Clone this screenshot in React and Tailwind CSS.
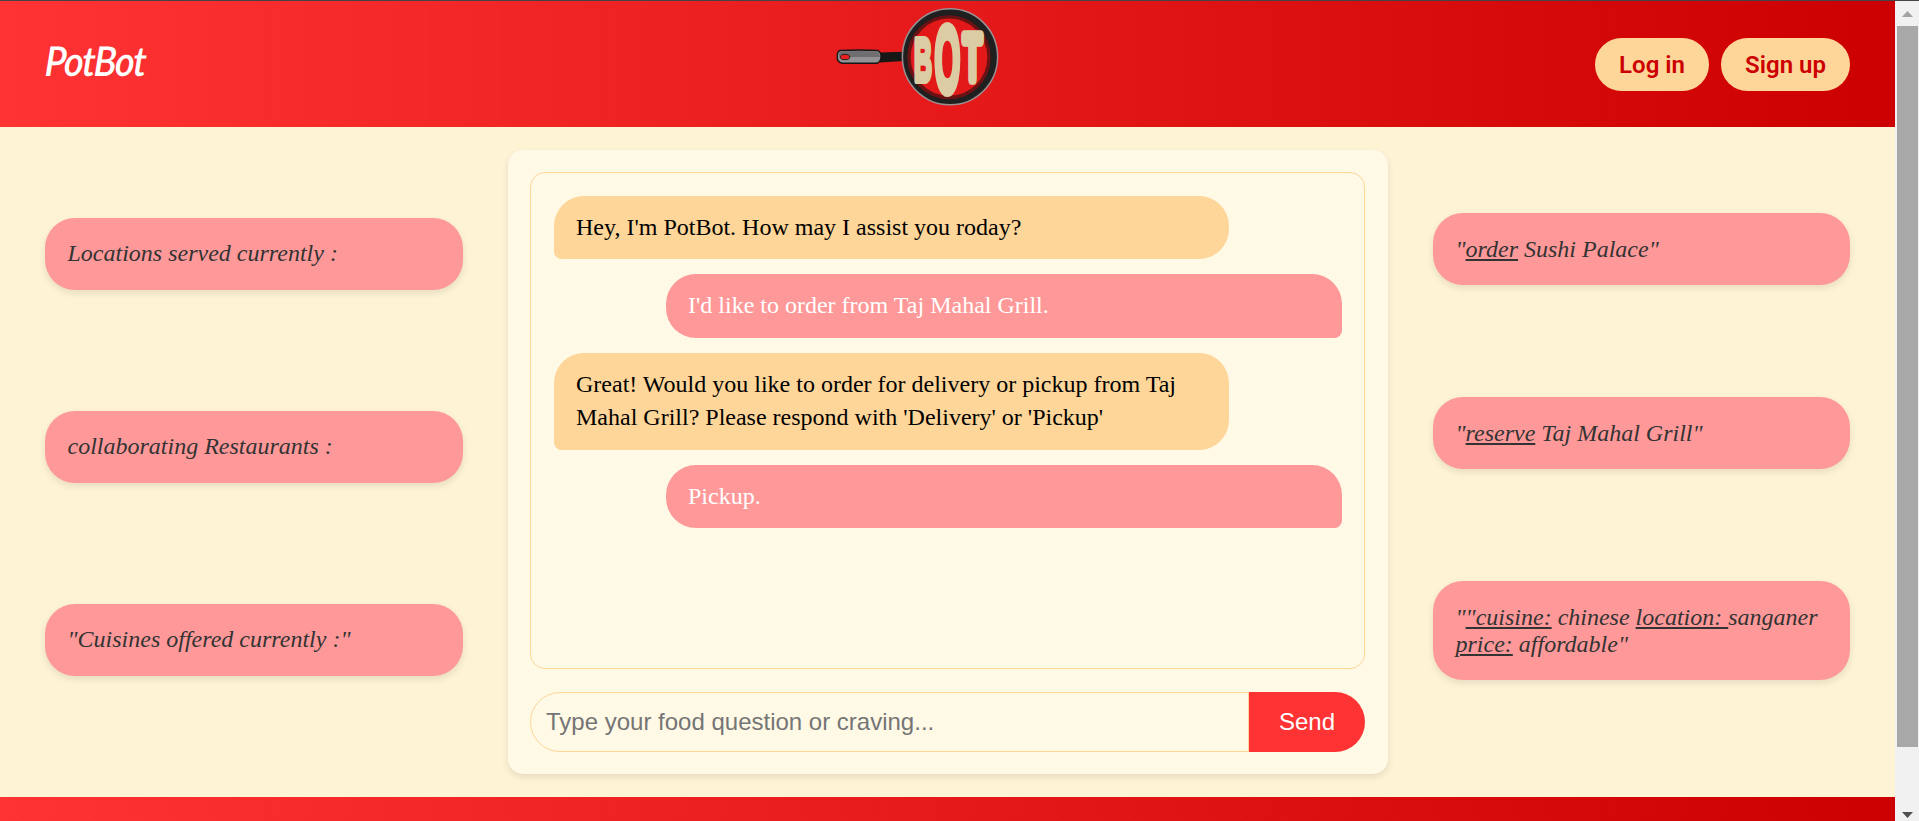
import React from "react";

const serif = "font-['Liberation_Serif',serif]";

function PanLogo() {
  return (
    <svg className="h-[120px] w-[200px]" viewBox="0 0 200 120" aria-label="Bot">
      <path d="M60 52.5 L84 51.8 V61 L60 62.5 Z" fill="#171717" />
      <path d="M20 50.5 Q38 49.5 58 50.5 Q61.5 53 61 57 Q61 61 57.5 63.2 L22 63.2 Q17 62 17.2 57 Q17 51.5 20 50.5Z" fill="#949294" stroke="#161616" strokeWidth="1.4" />
      <path d="M21 51.6 Q40 50.6 57.5 51.6 Q60 54 60 57 H30 Q28 53.5 24 54 Q20 54.5 19 57 Q18.5 53 21 51.6Z" fill="#6f6d6f" />
      <ellipse cx="25" cy="57" rx="4.8" ry="2.7" fill="#e91e1e" stroke="#222" strokeWidth="1" />
      <ellipse cx="130" cy="56.8" rx="47.6" ry="48" fill="#1f1f1f" stroke="#989092" strokeWidth="1.5" />
      <ellipse cx="129" cy="57.2" rx="40" ry="40.3" fill="#e31919" stroke="#6b1214" strokeWidth="3.4" />
      <g fill="#dccca4" stroke="#dccca4" strokeLinejoin="round" className="font-['Liberation_Sans',sans-serif] font-bold">
        <text transform="translate(94 80.5) scale(.83 2.05)" fontSize="30" strokeWidth="3">B</text>
        <text transform="translate(114.4 91.8) scale(.72 2.04)" fontSize="46" strokeWidth="4">O</text>
        <text transform="translate(143.3 79) scale(.95 1.95)" fontSize="32" strokeWidth="6" className="font-normal">T</text>
      </g>
    </svg>
  );
}

function Bubble({ mine, children }) {
  return (
    <div
      className={
        "rounded-[30px] px-[22.5px] py-[15px] text-2xl leading-[33.6px] " +
        (mine
          ? "w-[676px] self-end rounded-br-[7.5px] bg-[#ff9999] text-white"
          : "w-[675.5px] rounded-bl-[7.5px] bg-[#ffd699] text-black")
      }
    >
      {children}
    </div>
  );
}

function Hint({ children }) {
  return (
    <div className="rounded-[30px] bg-[#ff9999] p-[22.5px] text-2xl leading-[27px] text-[#333] italic shadow-[0_3px_7.5px_rgba(0,0,0,0.1)]">
      {children}
    </div>
  );
}

function Scrollbar() {
  return (
    <div className="flex w-6 shrink-0 flex-col items-center bg-[#f1f1f1]">
      <svg className="h-[25px] w-6 shrink-0" viewBox="0 0 24 25"><path d="M7 16 L12.5 10 L18 16Z" fill="#a3a3a3" /></svg>
      <div className="h-[721px] w-[21px] shrink-0 bg-[#a8a8a8]" />
      <div className="grow" />
      <svg className="h-[25px] w-6 shrink-0" viewBox="0 0 24 25"><path d="M7 16 L12.5 22 L18 16Z" fill="#505050" /></svg>
    </div>
  );
}

export default function App() {
  return (
    <div className={`flex h-[821px] w-[1919px] flex-col overflow-hidden ${serif}`}>
      <div className="h-px shrink-0 bg-[#444]" />
      <div className="flex min-h-0 grow">
        <div className="flex w-[1895px] shrink-0 flex-col bg-[#fff3d6]">
          <header className="grid h-[126px] shrink-0 grid-cols-[775px_200px_1fr] bg-[linear-gradient(90deg,#ff3333,#cc0000)]">
            <div className="pt-[37px] pl-[45px]">
              <span className="inline-block origin-left scale-x-[.92] -skew-x-3 font-['Lato',cursive] text-[41px] leading-[46px] font-semibold tracking-[-1.5px] text-white italic">PotBot</span>
            </div>
            <div className="pl-[45px]"><div className="-mt-px w-[200px]"><PanLogo /></div></div>
            <div className="flex justify-end gap-3 pt-[37px] pr-[45px] font-['Roboto',sans-serif] text-2xl font-semibold text-[#cc0000]">
              <button className="h-[53px] w-[114px] rounded-[30px] bg-[#ffd699]">Log in</button>
              <button className="h-[53px] w-[129px] rounded-[30px] bg-[#ffd699]">Sign up</button>
            </div>
          </header>

          <main className="flex h-[670px] shrink-0 items-start gap-[45px] px-[45px]">
            <section className="flex w-[418px] flex-col gap-[121px] pt-[90.5px]">
              <Hint>Locations served currently :</Hint>
              <Hint>collaborating Restaurants :</Hint>
              <Hint>"Cuisines offered currently :"</Hint>
            </section>

            <section className="mt-[22.5px] flex h-[624.5px] w-[880px] shrink-0 flex-col gap-[22.5px] rounded-[15px] bg-[#fff9e6] py-[22.5px] pr-[23px] pl-[22px] shadow-[0_3px_7.5px_rgba(0,0,0,0.1)]">
              <div className="flex h-[497px] flex-col gap-[15px] rounded-[15px] border border-[#ffd699] py-[22.5px] pr-[22.5px] pl-[22.5px]">
                <Bubble>Hey, I'm PotBot. How may I assist you roday?</Bubble>
                <Bubble mine>I'd like to order from Taj Mahal Grill.</Bubble>
                <Bubble>Great! Would you like to order for delivery or pickup from Taj Mahal Grill? Please respond with 'Delivery' or 'Pickup'</Bubble>
                <Bubble mine>Pickup.</Bubble>
              </div>
              <div className="flex h-[60px] font-['Liberation_Sans',sans-serif] text-2xl">
                <input
                  className="min-w-0 grow rounded-l-[30px] border border-[#ffd699] bg-transparent px-[15px] placeholder:text-[#757575]"
                  placeholder="Type your food question or craving..."
                />
                <button className="w-[116px] rounded-r-[30px] bg-[#ff3333] text-white">Send</button>
              </div>
            </section>

            <section className="flex w-[417px] flex-col gap-[112px] pt-[86px]">
              <Hint>"<u>order</u> Sushi Palace"</Hint>
              <Hint>"<u>reserve</u> Taj Mahal Grill"</Hint>
              <Hint>"<u>"cuisine:</u> chinese <u>location: </u>sanganer <u>price:</u> affordable"</Hint>
            </section>
          </main>
          <footer className="h-[126px] shrink-0 bg-[linear-gradient(90deg,#ff3333,#cc0000)]" />
        </div>
        <Scrollbar />
      </div>
    </div>
  );
}
